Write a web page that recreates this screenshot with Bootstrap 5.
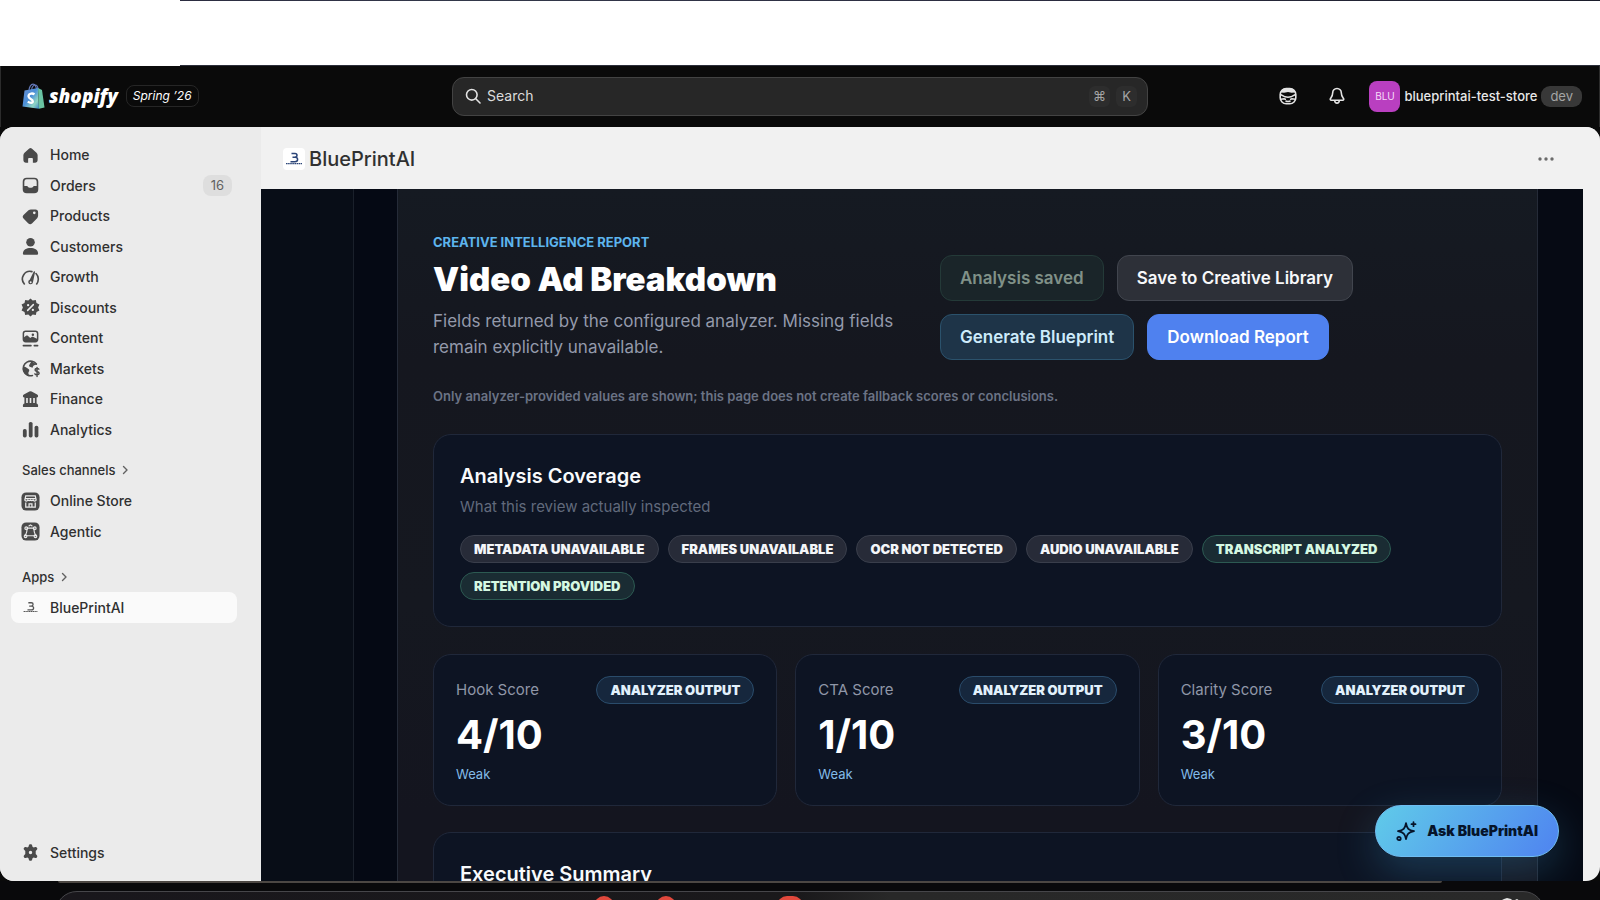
<!DOCTYPE html>
<html lang="en">
<head>
<meta charset="utf-8">
<meta name="viewport" content="width=device-width, initial-scale=1">
<title>BluePrintAI · Shopify</title>
<link href="https://cdn.jsdelivr.net/npm/bootstrap@5.3.0/dist/css/bootstrap.min.css" rel="stylesheet">
<script src="https://cdn.jsdelivr.net/npm/bootstrap@5.3.0/dist/js/bootstrap.bundle.min.js" defer></script>
<style>
  body { font-family: Inter, "Liberation Sans", sans-serif; background: #08080a; color: #303030; font-size: 15px; line-height: 20px; }
  a { color: inherit; text-decoration: none; }
  .shell { height: 100vh; overflow: hidden; }
  .desk-top { height: 66px; background: #fff; position: relative; }
  .desk-top::before { content: ""; position: absolute; left: 180px; right: 0; top: 0; height: 1px; background: linear-gradient(90deg, #2b2c40, #33384a 20%, #2b2c40 60%, #1b1d2b); }
  .desk-top::after { content: ""; position: absolute; left: 180px; right: 0; bottom: 0; height: 1px; background: #2b2e3a; }
  .topbar { height: 61px; background: #0a0a0a; color: #e3e3e3; padding: 0 17px 1px; border-left: 1px solid #2c2c2c; border-right: 1px solid #2c2c2c; }
  .side-zone { flex: 1 1 0; min-width: 0; }
  .brandword { font: italic 800 19px/28px "Open Sans", sans-serif; color: #fff; }
  .season { border: 1px solid #262626; border-radius: 8px; color: #fff; font-style: italic; font-size: 12px; line-height: 20px; padding: 0 6px; }
  .search { flex: 0 1 696px; height: 39px; background: #272727; border: 1px solid #434343; border-radius: 12px; padding: 0 10px 0 12px; gap: 6px; }
  .search input { background: none; border: 0; outline: 0; color: #e3e3e3; min-width: 0; flex: 1; font-size: 14px; padding: 0; }
  .search input::placeholder { color: #dcdcdc; opacity: 1; }
  kbd.keycap { background: #2d2d2d; color: #a5a5a5; border-radius: 6px; font: 13px/21px Inter, sans-serif; width: 21px; padding: 0; text-align: center; }
  .plain { background: none; border: 0; padding: 0; color: inherit; display: flex; align-items: center; }
  .avatar { width: 31px; height: 31px; border-radius: 8px; background: #b93fc0; color: #f6dcf8; font-size: 10px; line-height: 31px; text-align: center; }
  .devtag { background: #383838; color: #a5a5a5; border-radius: 9px; padding: 0 9px; line-height: 21px; font-size: 13px; }
  .store { font-size: 13px; font-weight: 500; color: #e8e8e8; }
  .window { flex: 1; min-height: 0; background: #0a0a0a; }
  .pane { background: #f1f1f1; border-radius: 14px; overflow: hidden; height: 100%; }
  .sidebar { width: 261px; flex: none; background: #ebebeb; padding: 13px 24px 13px 11px; font-weight: 500; }
  .navgroup { display: grid; grid-auto-rows: 1fr; list-style: none; margin: 0; padding: 0; }
  .ten { height: 305px; } .two { height: 61px; margin: 3px 0 15px; } .one { height: 31px; }
  .navrow { display: flex; align-items: center; height: 100%; padding: 0 5px 0 10px; gap: 10px; border-radius: 8px; font-size: 14px; }
  .navrow svg { width: 19px; height: 19px; flex: none; fill: #4a4a4a; }
  .navrow.current { background: #fafafa; }
  .count { background: #dedede; color: #616161; border-radius: 8px; font-size: 13px; font-weight: 400; line-height: 21px; padding: 0 8px; margin-left: auto; }
  .navhead { height: 30px; padding-left: 11px; font-size: 13px; gap: 4px; }
  .appcol { min-width: 0; }
  .apphead { height: 62px; padding: 2px 45px 0 22px; background: #f1f1f1; }
  .apphead h1 { font-size: 20px; line-height: 28px; font-weight: 500; margin: 0; }
  .applogo { width: 22px; height: 22px; border-radius: 4px; background: #fff; }
  .frame { flex: 1; min-height: 0; margin-right: 17px; background: #060a14; overflow: hidden; padding-right: 45px; }
  .gutter { width: 93px; flex: none; background: #080d17; border-right: 1px solid #1a202b; }
  .gutter2 { width: 43px; flex: none; background: #050914; }
  .panel { flex: 1; min-width: 0; border: solid #252b38; border-width: 0 1px; padding: 44px 35px; background: linear-gradient(180deg, #151a22 0, #15171f 25%, #151820 60%, #14151f 90%); }
  .eyebrow { color: #5db5ee; font-size: 13px; line-height: 18px; font-weight: 700; }
  .headline { color: #fff; font-size: 33px; line-height: 40px; font-weight: 900; margin: 8px 0 9px; }
  .blurb { color: #949aab; font-size: 17px; line-height: 26px; margin: 0; max-width: 480px; }
  .act { height: 46px; border-radius: 12px; font-size: 17px; font-weight: 600; line-height: 24px; padding: 0 19px; }
  .act-saved, .act-saved:disabled { background: #1a2529; border-color: #243a38; color: #809188; opacity: 1; }
  .act-lib { background: #2d3038; border-color: #41454e; color: #f7f8fa; }
  .act-gen { background: #1e3448; border-color: #2b526c; color: #cdebfb; }
  .act-dl { background: #4f81ef; border-color: #4f81ef; color: #fff; }
  .actions { width: 562px; flex: none; padding-top: 22px; }
  .actions, .act-line { gap: 13px; }
  .note { color: #6b7385; font-size: 13px; font-weight: 600; line-height: 20px; margin: 26px 0 28px; }
  .tile { background: #0d1423; border: 1px solid #20283a; border-radius: 18px; }
  .tile h3 { color: #f8fafc; font-size: 20px; line-height: 28px; font-weight: 600; margin: 0; }
  .tile-lg { padding: 27px 26px 26px; }
  .hint { color: #616a7c; font-size: 15px; line-height: 20px; margin: 7px 0 18px; }
  .pills { gap: 9px; }
  .pill { border: 1px solid #393e4b; background: #272b38; color: #f4f6f9; border-radius: 14px; font-size: 13px; font-weight: 900; line-height: 26px; padding: 0 13px; white-space: nowrap; }
  .pill-ok { background: #1a2c33; border-color: #2c5a52; color: #d5f8e2; }
  .pill-info { background: #16273d; border-color: #2a4c6b; color: #e2f1fc; }
  .scores { display: grid; grid-template-columns: repeat(3, 1fr); gap: 18px; margin: 27px 0 26px; }
  .score { padding: 21px 22px; height: 152px; }
  .score-label { color: #9097a8; font-size: 15px; }
  .score-num { color: #fff; font-size: 40px; line-height: 48px; font-weight: 700; margin: 7px 0 5px; }
  .score-word { color: #83bce8; font-size: 13px; line-height: 20px; }
  .ask { position: absolute; right: 24px; bottom: 24px; height: 52px; border-radius: 26px; border: 1px solid #6fbdf2; background: linear-gradient(125deg, #60cbe9, #4f83f0); color: #06142a; font-weight: 900; font-size: 14px; padding: 0 20px; gap: 10px; box-shadow: 0 14px 40px rgba(65, 165, 225, .26); }
  .desk-bottom { height: 19px; background: #09090b; padding: 10px 55px 0; overflow: hidden; position: relative; }
  .desk-bottom::before { content: ""; position: absolute; left: 58px; right: 158px; top: 0; height: 2px; border-radius: 0 0 4px 4px; background: #4c4743; }
  .dock { height: 60px; border: 1px solid #46464a; border-radius: 22px; background: linear-gradient(90deg, #19171c, #1a191b 50%, #282828 56%, #292929); position: relative; }
  .dot { position: absolute; top: 4px; width: 20px; height: 20px; border-radius: 10px; background: #e0483c; }
  .dot-a { left: 538px; } .dot-b { left: 600px; } .dot-c { left: 721px; width: 26px; }
  .trash { position: absolute; right: 20px; top: 5px; }
</style>
</head>
<body>
<svg width="0" height="0" class="position-absolute" aria-hidden="true">
  <symbol id="bp" viewBox="0 0 22 22"><path d="M8.500 5.500h3.500q2 0 2 1.800t-2 2q2.600 0 2.600 2.200t-2.600 2.200H7.500M9.500 9.300H12" fill="none" stroke="currentColor" stroke-width="1.500"/><path d="M3 15.700h16" stroke="currentColor" stroke-width="1.300" stroke-dasharray="1.600 .5"/></symbol>
  <symbol id="chev" viewBox="0 0 12 12"><path d="M4.500 2.500L8 6l-3.500 3.500" fill="none" stroke="#616161" stroke-width="1.400" stroke-linecap="round" stroke-linejoin="round"/></symbol>
</svg>
<div class="shell d-flex flex-column">
  <div class="desk-top"></div>
  <header class="topbar d-flex align-items-center">
    <div class="side-zone d-flex align-items-center">
      <a href="#" class="d-flex align-items-center ms-1" aria-label="Shopify">
        <svg width="23" height="27" viewBox="0 0 23 27"><defs><linearGradient id="bag" x1="0" y1="0" x2="1" y2="1"><stop offset="0" stop-color="#6b8fd0"/><stop offset=".45" stop-color="#4b8fd8"/><stop offset=".75" stop-color="#8fd6c4"/><stop offset="1" stop-color="#3b86c8"/></linearGradient></defs><path d="M7 8C7 4 9 1.200 11 1.200S14.500 4 14.500 7M9.500 7c.5-3 2-5 3.700-5 1.500 0 2.600 1.600 2.800 4" fill="none" stroke="#6478b8" stroke-width="1.200"/><path d="M2.500 7.500L16 5l1 20.800L.5 23.500z" fill="url(#bag)"/><path d="M16 5l4 2 2.500 17.500-5.500 1.300z" fill="#69c3a2"/><path d="M12.500 11.300c-2.500-1.600-6-.6-6 2 0 2.800 4.300 2.600 4.300 5 0 2-2.700 2-5 .3" fill="none" stroke="#fff" stroke-width="2.300"/></svg>
        <span class="brandword ms-1">shopify</span>
      </a>
      <span class="season ms-2">Spring ’26</span>
    </div>
    <div class="search d-flex align-items-center">
      <svg width="16" height="16" viewBox="0 0 16 16" fill="none" stroke="#e3e3e3" stroke-width="1.600" stroke-linecap="round"><circle cx="6.800" cy="6.800" r="5.300"/><path d="M10.800 10.800L15 15"/></svg>
      <input type="text" placeholder="Search" aria-label="Search">
      <kbd class="keycap">⌘</kbd><kbd class="keycap">K</kbd>
    </div>
    <div class="side-zone d-flex align-items-center justify-content-end">
      <button class="plain me-4" aria-label="Assistant"><svg width="18" height="18" viewBox="0 0 18 18"><rect x="1.200" y="1.500" width="15.600" height="15.300" rx="6" fill="none" stroke="#e3e3e3" stroke-width="1.600"/><path d="M1.500 5.500C2.500 2 5 1 9 1s6.500 1 7.500 4.500l-4 .2L9 5 5 5.700z" fill="#e3e3e3"/><path d="M1.500 7.500l4.500 2.300 3 .4 3-.4 4.500-2.300M2 12.300l3-.6 2 .8M16 12.300l-3-.6-2 .8M6.500 14q2.500 1 5 0" fill="none" stroke="#e3e3e3" stroke-width="1.500"/></svg></button>
      <button class="plain ms-2 me-4" aria-label="Notifications"><svg width="16" height="18" viewBox="0 0 16 18" fill="none" stroke="#e3e3e3" stroke-width="1.600" stroke-linejoin="round"><path d="M8 1.500c-2.600 0-4.300 2-4.300 4.300 0 3-1 4-2.200 5.700-.5.800-.2 1.700.8 1.700h11.400c1 0 1.300-.9.800-1.700-1.200-1.700-2.200-2.700-2.200-5.700 0-2.300-1.700-4.300-4.300-4.300zM5.700 13.500c.2 3.500 4.400 3.500 4.600 0"/></svg></button>
      <button class="plain gap-1"><span class="avatar">BLU</span><span class="store">blueprintai-test-store</span><span class="devtag">dev</span></button>
    </div>
  </header>
  <div class="window">
    <div class="pane d-flex">
      <nav class="sidebar d-flex flex-column" aria-label="Main">
        <ul class="navgroup ten">
          <li><a class="navrow" href="#"><svg viewBox="0 0 20 20"><path d="M8.700 2.700a2 2 0 0 1 2.600 0l5 4.500c.8.700 1.200 1.600 1.200 2.600V15a2.500 2.500 0 0 1-2.500 2.500h-2.500V13.500a1 1 0 0 0-1-1h-3a1 1 0 0 0-1 1v4H5A2.500 2.500 0 0 1 2.500 15V9.800c0-1 .4-1.900 1.200-2.600z"/></svg>Home</a></li>
          <li><a class="navrow" href="#"><svg viewBox="0 0 20 20"><path fill-rule="evenodd" d="M6 1.800h8A4.200 4.200 0 0 1 18.200 6v8a4.200 4.200 0 0 1-4.200 4.200H6A4.200 4.200 0 0 1 1.800 14V6A4.200 4.200 0 0 1 6 1.800zM6 3.500A2.500 2.500 0 0 0 3.500 6v4.500h2.600c.6 0 1 .3 1.200.8.500 1.500 4.900 1.500 5.400 0 .2-.5.600-.8 1.200-.8h2.600V6A2.500 2.500 0 0 0 14 3.500z"/></svg>Orders<span class="count">16</span></a></li>
          <li><a class="navrow" href="#"><svg viewBox="0 0 20 20"><path fill-rule="evenodd" d="M10.500 2.500h4.700a2.800 2.800 0 0 1 2.800 2.800v4c0 1-.4 1.800-1 2.500l-5.200 5.200a3 3 0 0 1-4.300 0L2.900 12.400a3 3 0 0 1 0-4.300l5-4.600c.7-.7 1.600-1 2.600-1zM14 7.500a1.400 1.400 0 1 0 0-2.800 1.400 1.400 0 0 0 0 2.800z"/></svg>Products</a></li>
          <li><a class="navrow" href="#"><svg viewBox="0 0 20 20"><circle cx="10" cy="5.500" r="4.500"/><path d="M2 17.300c0-4 4-5.800 8-5.800s8 1.800 8 5.800c0 .9-.6 1.400-1.400 1.400H3.400c-.8 0-1.400-.5-1.400-1.400z"/></svg>Customers</a></li>
          <li><a class="navrow" href="#"><svg viewBox="0 0 20 20"><path d="M3.500 16.800A8 8 0 0 1 11.500 3.800M15.800 5.800a8.500 8.500 0 0 1 .7 11" fill="none" stroke="#4a4a4a" stroke-width="1.700" stroke-linecap="round"/><path fill-rule="evenodd" d="M13.300 3.900a.8.800 0 0 1 1.500.4L12.600 15a2.500 2.500 0 1 1-3.400-2.600zM10.200 16a1 1 0 1 0 0-2 1 1 0 0 0 0 2z"/></svg>Growth</a></li>
          <li><a class="navrow" href="#"><svg viewBox="0 0 20 20"><path d="M10 .5l2.300 2.200 3.300-.6.700 3.200 3.100 1.500L18 10l1.400 3.200-3.100 1.500-.7 3.200-3.300-.6L10 19.500l-2.300-2.200-3.300.6-.7-3.200-3.100-1.500L2 10 .6 6.800l3.100-1.500.7-3.200 3.300.6z"/><path d="M13 7l-6 6" stroke="#ebebeb" stroke-width="1.600" stroke-linecap="round"/><circle cx="7.500" cy="7.500" r="1.200" fill="#ebebeb"/><circle cx="12.500" cy="12.500" r="1.200" fill="#ebebeb"/></svg>Discounts</a></li>
          <li><a class="navrow" href="#"><svg viewBox="0 0 20 20"><path fill-rule="evenodd" d="M5 1.500h10A3.300 3.300 0 0 1 18.300 4.800v6a3.300 3.300 0 0 1-3.300 3.300H5a3.300 3.300 0 0 1-3.300-3.300v-6A3.300 3.300 0 0 1 5 1.500zM5 3.100c-1 0-1.700.7-1.700 1.700v4l2-1.600c.7-.5 1.500-.5 2.100.1l2.300 2.200 1.500-1c.6-.4 1.300-.4 1.900 0l3.600 1.700V4.800c0-1-.7-1.700-1.700-1.700zM12.500 7.300a1.300 1.300 0 1 0 0-2.600 1.300 1.300 0 0 0 0 2.600z"/><path d="M2.500 17.500h8M14 17.500h3.500" stroke="#4a4a4a" stroke-width="1.700" stroke-linecap="round"/></svg>Content</a></li>
          <li><a class="navrow" href="#"><svg viewBox="0 0 20 20"><path d="M12 17.400A7.700 7.700 0 1 1 16.200 5.300" fill="none" stroke="#4a4a4a" stroke-width="1.700" stroke-linecap="round"/><path d="M2.500 8c2 .3 3.500 1.300 5 2.200 1.800 1 1.300 2.300.5 3.500-.5 1-.2 2.500.8 4C4.500 17.500 1 13.500 2.500 8zM11 2.300l5.500 3.500c-2.800.4-4 1.500-4.300 3.300L10 8.500c-1.500-.5-2-1.500-1-2.800z"/><path d="M18.800 10.700c-.6-.8-4-1.200-4 .8 0 2.300 4.300 1 4.300 3.600 0 2-3.800 1.800-4.500.5M16.900 8.800v9.700" fill="none" stroke="#4a4a4a" stroke-width="1.500" stroke-linecap="round"/></svg>Markets</a></li>
          <li><a class="navrow" href="#"><svg viewBox="0 0 20 20"><path d="M8.800 1.700a2.500 2.500 0 0 1 2.400 0l5.800 3c1.600.9 1.200 3.300-.6 3.300v6.200c.9.200 1.600 1 1.600 2v.8c0 .6-.4 1-1 1H3c-.6 0-1-.4-1-1v-.8c0-1 .7-1.800 1.600-2V8C1.800 8 1.400 5.600 3 4.700z"/><path d="M6.300 8.500v5.200M10 8.500v5.200M13.700 8.500v5.200" stroke="#ebebeb" stroke-width="1.700"/></svg>Finance</a></li>
          <li><a class="navrow" href="#"><svg viewBox="0 0 20 20"><rect x="2" y="9.500" width="4" height="9" rx="1.800"/><rect x="8.200" y="2" width="4" height="16.500" rx="1.800"/><rect x="14.300" y="6" width="4" height="12.500" rx="1.800"/></svg>Analytics</a></li>
        </ul>
        <a href="#" class="navhead d-flex align-items-center mt-2 pt-1">Sales channels<svg width="12" height="12"><use href="#chev"/></svg></a>
        <ul class="navgroup two">
          <li><a class="navrow" href="#"><svg viewBox="0 0 20 20"><rect x=".5" y=".5" width="19" height="19" rx="5"/><path d="M5 4h10l1 4.500a1.800 1.800 0 0 1-3.300 0 1.800 1.800 0 0 1-2.700 0 1.800 1.800 0 0 1-2.700 0A1.800 1.800 0 0 1 4 8.500zM4.500 7h11M5 11v5h10v-5M8.500 16v-3.500h3V16" fill="none" stroke="#ebebeb" stroke-width="1.300"/></svg>Online Store</a></li>
          <li><a class="navrow" href="#"><svg viewBox="0 0 20 20"><rect x=".5" y=".5" width="19" height="19" rx="5"/><g fill="none" stroke="#ebebeb" stroke-width="1.200"><path d="M6.500 6.500h7c0 3 .5 5 2 8h-11c1.500-3 2-5 2-8zM8 4.500l2-1.500 2 1.500"/><circle cx="5.500" cy="6.500" r="1.400"/><circle cx="14.500" cy="6.500" r="1.400"/><circle cx="4.800" cy="15" r="1.400"/><circle cx="15.200" cy="15" r="1.400"/></g></svg>Agentic</a></li>
        </ul>
        <a href="#" class="navhead d-flex align-items-center">Apps<svg width="12" height="12"><use href="#chev"/></svg></a>
        <ul class="navgroup one">
          <li><a class="navrow current" href="#" aria-current="page"><svg viewBox="0 0 22 22" color="#555"><use href="#bp"/></svg>BluePrintAI</a></li>
        </ul>
        <ul class="navgroup one mt-auto">
          <li><a class="navrow" href="#"><svg viewBox="0 0 20 20"><path fill-rule="evenodd" d="M8.300 2.300c.2-.8.700-1.100 1.700-1.100s1.500.3 1.700 1.100l.4 1.700 1.200.7 1.700-.5c.8-.2 1.300 0 1.800.9s.5 1.500-.1 2.100L15.500 8.500v1.500 1.500l1.200 1.300c.6.600.6 1.200.1 2.100s-1 1.100-1.800.9l-1.700-.5-1.200.7-.4 1.700c-.2.800-.7 1.100-1.700 1.100s-1.500-.3-1.700-1.100L7.900 16l-1.200-.7-1.700.5c-.8.200-1.300 0-1.800-.9s-.5-1.500.1-2.100l1.200-1.300v-3L3.300 7.200c-.6-.6-.6-1.200-.1-2.100S4.200 4 5 4.200l1.700.5L7.900 4zM10 11.800a1.800 1.800 0 1 0 0-3.600 1.800 1.800 0 0 0 0 3.600z"/></svg>Settings</a></li>
        </ul>
      </nav>
      <div class="appcol d-flex flex-column flex-grow-1">
        <div class="apphead d-flex align-items-center">
          <svg class="applogo me-1" viewBox="0 0 22 22" color="#2b4578"><use href="#bp"/></svg>
          <h1>BluePrintAI</h1>
          <button class="plain ms-auto" aria-label="More actions"><svg width="18" height="18" viewBox="0 0 18 18" fill="#6b6b6b"><circle cx="3" cy="9" r="1.700"/><circle cx="9" cy="9" r="1.700"/><circle cx="15" cy="9" r="1.700"/></svg></button>
        </div>
        <div class="frame d-flex position-relative">
          <div class="gutter"></div><div class="gutter2"></div>
          <main class="panel">
            <div class="d-flex justify-content-between">
              <div>
                <div class="eyebrow">CREATIVE INTELLIGENCE REPORT</div>
                <h2 class="headline">Video Ad Breakdown</h2>
                <p class="blurb">Fields returned by the configured analyzer. Missing fields remain explicitly unavailable.</p>
              </div>
              <div class="actions d-flex flex-column">
                <div class="act-line d-flex">
                  <button class="btn act act-saved" disabled>Analysis saved</button>
                  <button class="btn act act-lib">Save to Creative Library</button>
                </div>
                <div class="act-line d-flex">
                  <button class="btn act act-gen">Generate Blueprint</button>
                  <button class="btn act act-dl">Download Report</button>
                </div>
              </div>
            </div>
            <p class="note">Only analyzer-provided values are shown; this page does not create fallback scores or conclusions.</p>
            <section class="tile tile-lg">
              <h3>Analysis Coverage</h3>
              <p class="hint">What this review actually inspected</p>
              <div class="pills d-flex flex-wrap">
                <span class="pill">METADATA UNAVAILABLE</span><span class="pill">FRAMES UNAVAILABLE</span><span class="pill">OCR NOT DETECTED</span><span class="pill">AUDIO UNAVAILABLE</span><span class="pill pill-ok">TRANSCRIPT ANALYZED</span><span class="pill pill-ok">RETENTION PROVIDED</span>
              </div>
            </section>
            <div class="scores">
              <section class="tile score"><div class="d-flex justify-content-between align-items-center"><span class="score-label">Hook Score</span><span class="pill pill-info">ANALYZER OUTPUT</span></div><div class="score-num">4/10</div><div class="score-word">Weak</div></section>
              <section class="tile score"><div class="d-flex justify-content-between align-items-center"><span class="score-label">CTA Score</span><span class="pill pill-info">ANALYZER OUTPUT</span></div><div class="score-num">1/10</div><div class="score-word">Weak</div></section>
              <section class="tile score"><div class="d-flex justify-content-between align-items-center"><span class="score-label">Clarity Score</span><span class="pill pill-info">ANALYZER OUTPUT</span></div><div class="score-num">3/10</div><div class="score-word">Weak</div></section>
            </div>
            <section class="tile tile-lg"><h3>Executive Summary</h3></section>
          </main>
          <button class="ask d-flex align-items-center"><svg width="21" height="21" viewBox="0 0 21 21" fill="none" stroke="#06142a" stroke-width="1.800" stroke-linejoin="round" stroke-linecap="round"><path d="M10 2.200c.9 5.300 2.500 7 8 8-5.500 1-7.100 2.700-8 8-.9-5.300-2.500-7-8-8 5.500-1 7.100-2.700 8-8zM17.500 1.200v4M15.500 3.200h4"/><circle cx="3" cy="17.500" r="1.700"/></svg>Ask BluePrintAI</button>
        </div>
      </div>
    </div>
  </div>
  <div class="desk-bottom"><div class="dock"><span class="dot dot-a"></span><span class="dot dot-b"></span><span class="dot dot-c"></span><svg class="trash" width="26" height="10" viewBox="0 0 26 10" fill="#e4e4e4"><path d="M2 4l4-2 3-1 4 1 2 2 4-2 3 2v6H2z"/></svg></div></div>
</div>
</body>
</html>
